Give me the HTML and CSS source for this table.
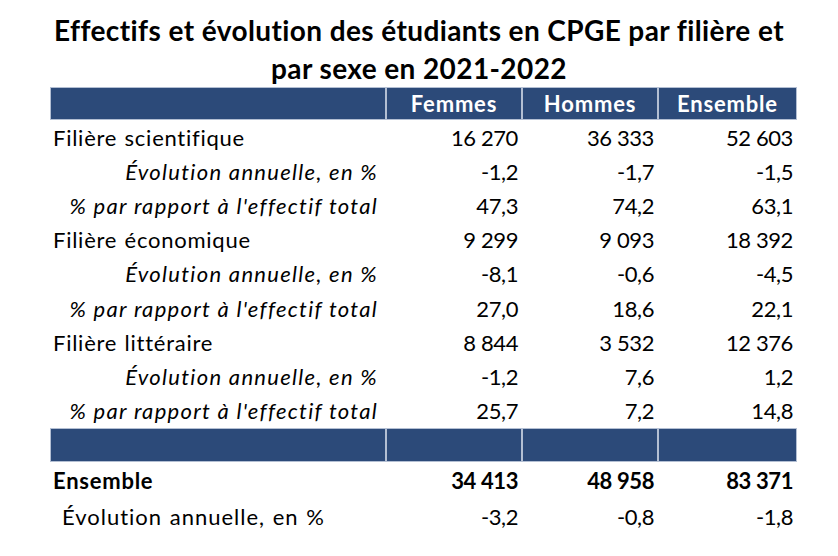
FILE: index.html
```html
<!DOCTYPE html>
<html lang="fr">
<head>
<meta charset="utf-8">
<link rel="stylesheet" href="styles.css">
</head>
<body>
<div class="page">
  <h1 class="title">Effectifs et évolution des étudiants en CPGE par filière et<br>par sexe en 2021-2022</h1>
  <table class="stats">
    <colgroup>
      <col class="c-label"><col class="c-num"><col class="c-num"><col class="c-num4">
    </colgroup>
    <thead>
      <tr class="head">
        <th></th><th>Femmes</th><th>Hommes</th><th>Ensemble</th>
      </tr>
    </thead>
    <tbody>
      <tr class="row"><td class="lbl">Filière scientifique</td><td>16 270</td><td>36 333</td><td>52 603</td></tr>
      <tr class="row"><td class="lbl sub">Évolution annuelle, en %</td><td>-1,2</td><td>-1,7</td><td>-1,5</td></tr>
      <tr class="row"><td class="lbl sub">% par rapport à l'effectif total</td><td>47,3</td><td>74,2</td><td>63,1</td></tr>
      <tr class="row"><td class="lbl">Filière économique</td><td>9 299</td><td>9 093</td><td>18 392</td></tr>
      <tr class="row"><td class="lbl sub">Évolution annuelle, en %</td><td>-8,1</td><td>-0,6</td><td>-4,5</td></tr>
      <tr class="row"><td class="lbl sub">% par rapport à l'effectif total</td><td>27,0</td><td>18,6</td><td>22,1</td></tr>
      <tr class="row"><td class="lbl">Filière littéraire</td><td>8 844</td><td>3 532</td><td>12 376</td></tr>
      <tr class="row"><td class="lbl sub">Évolution annuelle, en %</td><td>-1,2</td><td>7,6</td><td>1,2</td></tr>
      <tr class="row"><td class="lbl sub">% par rapport à l'effectif total</td><td>25,7</td><td>7,2</td><td>14,8</td></tr>
      <tr class="band"><td></td><td></td><td></td><td></td></tr>
      <tr class="row total"><td class="lbl">Ensemble</td><td>34 413</td><td>48 958</td><td>83 371</td></tr>
      <tr class="row last"><td class="lbl evo">Évolution annuelle, en %</td><td>-3,2</td><td>-0,8</td><td>-1,8</td></tr>
    </tbody>
  </table>
</div>
</body>
</html>
```

FILE: styles.css
```css
html, body {
  margin: 0;
  padding: 0;
  background: #ffffff;
}

.page {
  width: 838px;
  height: 556px;
  font-family: Lato, "Open Sans", sans-serif;
  font-variant-ligatures: none;
  color: #000000;
}

.title {
  margin: 0;
  padding-top: 11px;
  font-size: 28px;
  font-weight: 700;
  letter-spacing: 0.4px;
  line-height: 38px;
  text-align: center;
  color: #000000;
}

.stats {
  margin-left: 50px;
  width: 747px;
  table-layout: fixed;
  border-collapse: separate;
  border-spacing: 0;
  font-size: 22px;
  font-variant-numeric: tabular-nums;
}

.c-label { width: 336px; }
.c-num { width: 136px; }
.c-num4 { width: 139px; }

.head th,
.band td {
  background: #2c4a79;
  border: 1px solid #b3bfd3;
  padding: 0 4px;
}

.head th {
  height: 31px;
  color: #ffffff;
  font-weight: 700;
  text-align: center;
  font-size: 22px;
  letter-spacing: 0.8px;
}

.band td {
  height: 32px;
}

.row td {
  height: 34.2px;
  padding: 0 4px 0 0;
  text-align: right;
  white-space: nowrap;
  letter-spacing: -0.4px;
}

.row td.lbl {
  text-align: left;
  padding-left: 3px;
  letter-spacing: 0.75px;
  word-spacing: 1px;
}

.row td.sub {
  text-align: right;
  font-style: italic;
  letter-spacing: 1.3px;
  word-spacing: 0;
  padding-right: 8px;
}

.total td {
  height: 38px;
  font-weight: 700;
}

.last td {
  height: 34px;
}

.row td.evo {
  padding-left: 12px;
  letter-spacing: 1px;
  word-spacing: 1px;
}
```
